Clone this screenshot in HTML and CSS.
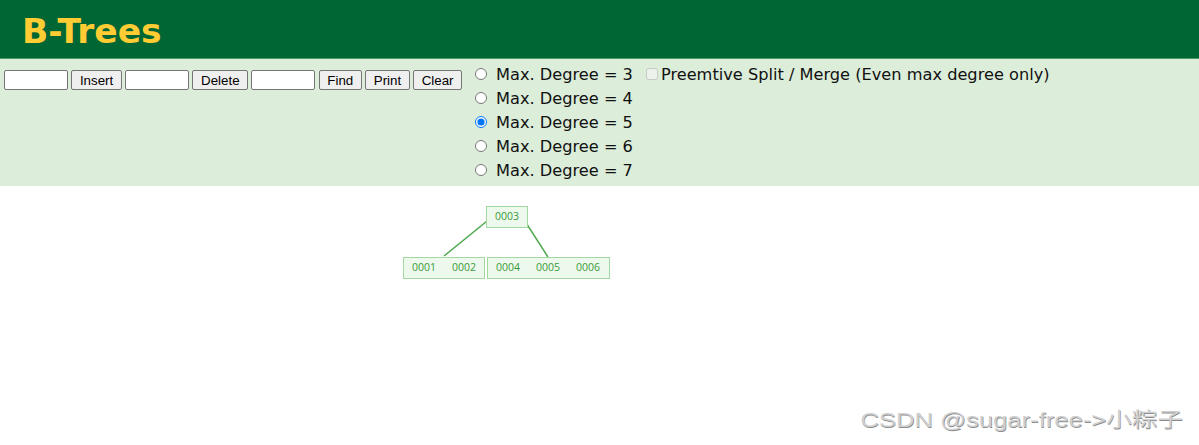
FILE: index.html
```html
<!DOCTYPE html>
<html>
<head>
<meta charset="utf-8">
<title>B-Trees</title>
<link rel="stylesheet" href="styles.css">
</head>
<body>
<div class="header"><h1 class="title">B-Trees</h1></div>
<div class="panel">
  <div class="ops">
    <input class="field" type="text">
    <button class="btn">Insert</button>
    <input class="field" type="text">
    <button class="btn">Delete</button>
    <input class="field" type="text">
    <button class="btn">Find</button>
    <button class="btn">Print</button>
    <button class="btn">Clear</button>
  </div>
  <div class="degrees">
    <label class="row"><input class="radio" type="radio" name="deg"> Max. Degree = 3</label>
    <label class="row"><input class="radio" type="radio" name="deg"> Max. Degree = 4</label>
    <label class="row"><input class="radio" type="radio" name="deg" checked> Max. Degree = 5</label>
    <label class="row"><input class="radio" type="radio" name="deg"> Max. Degree = 6</label>
    <label class="row"><input class="radio" type="radio" name="deg"> Max. Degree = 7</label>
  </div>
  <label class="row split"><input class="check" type="checkbox" disabled>Preemtive Split / Merge (Even max degree only)</label>
</div>
<div class="canvas">
  <svg class="tree" width="1199" height="259" viewBox="0 0 1199 259">
    <line x1="492" y1="31" x2="444" y2="70" class="edge"/>
    <line x1="521" y1="29" x2="548" y2="71" class="edge"/>
    <rect x="486.5" y="20.5" width="41" height="21" class="node"/>
    <rect x="403.5" y="71.5" width="81" height="21" class="node"/>
    <rect x="487.5" y="71.5" width="122" height="21" class="node"/>
    <text x="507" y="34" class="key">0003</text>
    <text x="424" y="85" class="key">0001</text>
    <text x="464" y="85" class="key">0002</text>
    <text x="508" y="85" class="key">0004</text>
    <text x="548" y="85" class="key">0005</text>
    <text x="588" y="85" class="key">0006</text>
  </svg>
  <div class="watermark">CSDN @sugar-free-&gt;小粽子</div>
</div>
</body>
</html>
```
FILE: styles.css
```css
html, body {
  margin: 0;
  padding: 0;
  background: #ffffff;
}
body {
  font-family: "DejaVu Sans", Verdana, sans-serif;
  width: 1199px;
  height: 445px;
  overflow: hidden;
}
.header {
  height: 58px;
  background: #006633;
  border-bottom: 1px solid #4d9c62;
  box-sizing: content-box;
}
.title {
  margin: 0;
  padding: 4px 0 0 22px;
  line-height: 54px;
  font-size: 34.5px;
  font-weight: bold;
  color: #ffcc33;
  font-family: "DejaVu Sans", Verdana, sans-serif;
}
.panel {
  display: flex;
  align-items: flex-start;
  background: #dcedda;
  padding: 3px 0 4px 4px;
  height: 120px;
}
.ops {
  display: flex;
  gap: 3.3px;
  margin-top: 8px;
}
.field {
  box-sizing: border-box;
  width: 64px;
  height: 20px;
  margin: 0;
  padding: 1px 2px;
  border: 1px solid #767676;
  border-radius: 2px;
  background: #fff;
  font: 13.33px "Liberation Sans", Arial, sans-serif;
}
.btn {
  box-sizing: border-box;
  height: 20px;
  margin: 0;
  padding: 0 7.6px;
  border: 1px solid #767676;
  border-radius: 2px;
  background: #efefef;
  color: #000;
  font: 13.33px "Liberation Sans", Arial, sans-serif;
}
.degrees {
  display: flex;
  flex-direction: column;
  margin-left: 8px;
}
.row {
  display: flex;
  align-items: center;
  height: 24px;
  font-size: 16.2px;
  color: #111;
  white-space: nowrap;
}
.radio {
  width: 12px;
  height: 12px;
  margin: 0 9px 0 5px;
}
.split {
  margin-left: 9px;
}
.check {
  width: 12px;
  height: 12px;
  margin: 0 3px 0 4px;
}
.canvas {
  position: relative;
  height: 259px;
}
.tree {
  display: block;
}
.edge {
  stroke: #4ea84e;
  stroke-width: 1.5;
}
.node {
  fill: #edf9ec;
  stroke: #a3d9a0;
  stroke-width: 1;
}
.key {
  font-family: "Open Sans", "Noto Sans", sans-serif;
  font-size: 10.5px;
  fill: #3a9a3a;
  text-anchor: middle;
}
.watermark {
  position: absolute;
  right: 16px;
  top: 218px;
  font-family: "Liberation Sans", Arial, "Noto Sans CJK SC", sans-serif;
  font-size: 20px;
  color: #cfcfcf;
  text-shadow: 0.5px 0.5px 0.5px #8c8c8c;
  white-space: nowrap;
  transform: scaleX(1.28);
  transform-origin: right center;
}
```
